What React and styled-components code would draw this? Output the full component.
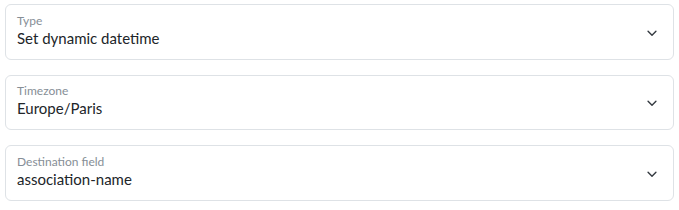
import React from "react";
import styled, { createGlobalStyle } from "styled-components";

const Global = createGlobalStyle`
  body {
    margin: 0;
    background: #fff;
    font-family: Lato, "Noto Sans", sans-serif;
  }
`;

const fields = [
  { label: "Type", value: "Set dynamic datetime" },
  { label: "Timezone", value: "Europe/Paris" },
  { label: "Destination field", value: "association-name" },
];

export default function App() {
  return (
    <>
      <Global />
      <Form>
        {fields.map((f) => (
          <Select key={f.label}>
            <Text>
              <Label>{f.label}</Label>
              <Value>{f.value}</Value>
            </Text>
            <Chevron viewBox="0 0 16 16">
              <path d="M3.5 6l4.5 4.5L12.5 6" fill="none" stroke="#343a40" strokeWidth="1.6" strokeLinecap="round" strokeLinejoin="round" />
            </Chevron>
          </Select>
        ))}
      </Form>
    </>
  );
}

const Form = styled.div`
  display: flex;
  flex-direction: column;
  gap: 15px;
  padding: 4px 5px;
`;

const Select = styled.div`
  display: flex;
  align-items: center;
  height: 55.5px;
  box-sizing: border-box;
  border: 1px solid #dee2e6;
  border-radius: 6px;
  padding: 0 14px 0 11px;
`;

const Text = styled.div`
  flex: 1;
  display: flex;
  flex-direction: column;
  margin-bottom: 3px;
`;

const Label = styled.span`
  font-size: 12px;
  color: #868e96;
  line-height: 15px;
`;

const Value = styled.span`
  font-size: 15px;
  color: #212529;
  line-height: 20px;
`;

const Chevron = styled.svg`
  width: 14px;
  height: 14px;
  margin-top: 2px;
`;
